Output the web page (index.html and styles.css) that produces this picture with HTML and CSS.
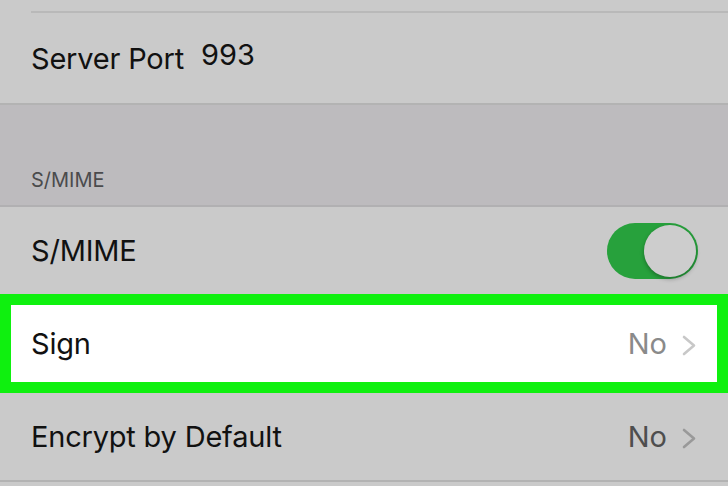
FILE: index.html
```html
<!DOCTYPE html>
<html>
<head>
<meta charset="utf-8">
<link rel="stylesheet" href="styles.css">
</head>
<body>
<div class="screen">
  <div class="row-tail"></div>
  <div class="row row-top inset-line">
    <span class="label">Server Port</span>
    <span class="port">993</span>
  </div>
  <div class="group-header">
    <span class="header-text">S/MIME</span>
  </div>
  <div class="row">
    <span class="label">S/MIME</span>
    <span class="toggle"><span class="knob"></span></span>
  </div>
  <div class="highlight">
    <div class="row row-white">
      <span class="label">Sign</span>
      <span class="detail light">No<svg class="chev" width="16" height="22" viewBox="0 0 16 22"><path d="M3 3 L13 11.5 L3 20" fill="none" stroke="#c8c8c8" stroke-width="2.6" stroke-linecap="round" stroke-linejoin="round"/></svg></span>
    </div>
  </div>
  <div class="row row-last">
    <span class="label">Encrypt by Default</span>
    <span class="detail dark">No<svg class="chev" width="16" height="22" viewBox="0 0 16 22"><path d="M3 3 L13 11.5 L3 20" fill="none" stroke="#999999" stroke-width="2.6" stroke-linecap="round" stroke-linejoin="round"/></svg></span>
  </div>
</div>
</body>
</html>
```
FILE: styles.css
```css
html, body {
  margin: 0;
  padding: 0;
}
body {
  background: #cacaca;
  font-family: Inter, "Liberation Sans", sans-serif;
  color: #111;
  width: 728px;
  height: 486px;
  overflow: hidden;
}
.screen {
  display: flex;
  flex-direction: column;
}
.row-tail {
  height: 11px;
  margin-left: 31px;
  border-bottom: 2px solid #b9b9b9;
}
.row {
  display: flex;
  align-items: center;
  padding: 0 31px;
  height: 89px;
  background: #cacaca;
  border-bottom: 2px solid #b3b3b3;
  box-sizing: border-box;
}
.row-top {
  height: 92px;
}
.label {
  font-size: 29px;
  letter-spacing: -0.2px;
}
.port {
  font-size: 29px;
  margin-left: 17px;
  margin-top: -7px;
}
.group-header {
  height: 102px;
  background: #bdbbbe;
  border-bottom: 2px solid #b1b0b2;
  box-sizing: border-box;
  display: flex;
  align-items: flex-end;
  padding: 0 31px 13px;
}
.header-text {
  font-size: 20px;
  color: #4b4b4d;
}
.toggle {
  margin-left: auto;
  margin-right: -1px;
  width: 91px;
  height: 56px;
  border-radius: 28px;
  background: #27a13c;
  position: relative;
  box-sizing: border-box;
}
.knob {
  position: absolute;
  right: 2px;
  top: 2px;
  width: 52px;
  height: 52px;
  border-radius: 50%;
  background: #cdcdcd;
  box-shadow: 0 2px 4px rgba(0,0,0,0.3);
}
.highlight {
  border: 11px solid #0ff00f;
  margin-top: -2px;
  height: 99px;
  box-sizing: border-box;
}
.highlight .row {
  height: 77px;
  border-bottom: none;
  padding: 0 20px;
  background: #ffffff;
}
.detail {
  margin-left: auto;
  font-size: 29px;
  display: flex;
  align-items: center;
}
.light { color: #8a8a8a; }
.dark { color: #4e4e4e; }
.chev {
  margin-left: 14px;
  margin-right: 0;
  margin-top: 3px;
}
.row-last {
  height: 89px;
}
```
